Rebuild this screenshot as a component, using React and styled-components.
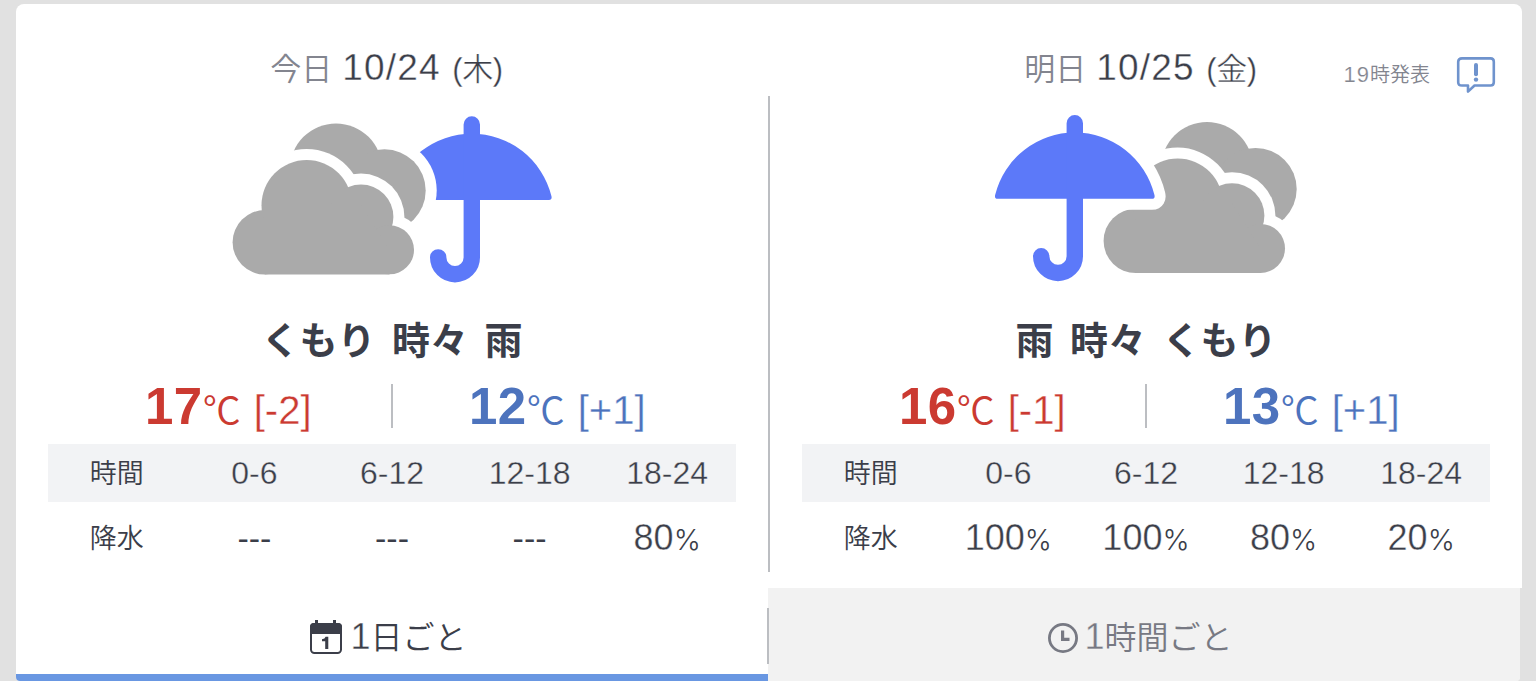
import styled, {createGlobalStyle, css} from "styled-components";

const GlobalStyle = createGlobalStyle`
  * {
    box-sizing: border-box;
  }

  body {
    margin: 0;
    height: 681px;
    overflow: hidden;
    background: #e1e1e1;
    color: #3b3e49;
    font-family: "Liberation Sans", "Noto Sans CJK JP", sans-serif;
    font-weight: 350;
  }
`;

// 数字を細く見せるため、背景色で縁取りします.
const thin = css`
  -webkit-text-stroke: 0.35px ${(props) => props.$back || "#fff"};
`;

const Page = styled.div`
  height: 681px;
  padding: 4px 14px 0 16px;
  overflow: hidden;
`;

const Card = styled.main`
  display: flex;
  height: 584px;
  border-radius: 8px 8px 0 0;
  background: #fff;
`;

const Divider = styled.div`
  width: 2px;
  height: ${(props) => props.$height}px;
  margin: ${(props) => props.$margin};
  flex: none;
  background: #bcbec2;
`;

const Day = styled.section`
  position: relative;
  width: 688px;
  flex: none;
  margin-left: 32px;
`;

const DayTitle = styled.h2`
  display: flex;
  align-items: baseline;
  justify-content: center;
  height: 106px;
  margin: 0;
  padding: 43px 11px 0 0;
  font-size: 31px;
  line-height: 42px;
  font-weight: 350;
  white-space: pre;
`;

const DayLabel = styled.span`
  margin-right: 10px;
  color: #83858f;
`;

const DateText = styled.span`
  font-size: 37px;
  letter-spacing: 1.2px;
  ${thin}
`;

const Week = styled.span`
  letter-spacing: -0.4px;
  ${thin}
`;

// 発表時刻とお知らせアイコン
const Issued = styled.div`
  position: absolute;
  top: 51px;
  right: -6px;
  display: flex;
  align-items: center;
  gap: 26px;
  color: #83858f;
  font-size: 20px;
  line-height: 40px;
`;

const IssuedTime = styled.span`
  font-size: 22px;
  letter-spacing: 1px;
  -webkit-text-stroke: 0.2px #fff;
`;

const WeatherIcon = styled.svg`
  display: block;
  width: 344px;
  height: 180px;
  margin: 0 auto;
`;

const Condition = styled.div`
  height: 90px;
  padding-top: 23px;
  font-size: 38px;
  line-height: 56px;
  font-weight: 700;
  text-align: center;
  word-spacing: 6px;
`;

const Temps = styled.div`
  display: flex;
  height: 64px;
  padding-top: 4px;
`;

const Temp = styled.div`
  display: flex;
  width: 343px;
  flex: none;
  align-items: baseline;
  margin-top: -2px;
  padding-left: ${(props) => (props.$high ? 97 : 76)}px;
  font-size: 38px;
  line-height: 50px;
  color: ${(props) => (props.$high ? "#cb3a31" : "#4d73bd")};
`;

const Degree = styled.span`
  font-size: 51px;
  font-weight: 700;
  letter-spacing: 0.5px;
`;

const Unit = styled.span`
  font-family: "Noto Sans CJK JP", sans-serif;
`;

const Diff = styled.span`
  margin-left: 13px;
  font-size: 40px;
  ${thin}
`;

const Row = styled.div`
  display: grid;
  grid-template-columns: repeat(5, 1fr);
  align-items: center;
  justify-items: center;
  height: ${(props) => (props.$head ? 58 : 72)}px;
  ${(props) =>
    props.$head &&
    css`
      background: #f2f3f5;
    `}
`;

const RowName = styled.span`
  padding-bottom: 3px;
  font-size: 27px;
`;

const Hour = styled.span`
  font-size: 32px;
  ${thin}
`;

const Chance = styled.span`
  font-size: ${(props) => (props.$empty ? 34 : 36)}px;
  ${(props) => !props.$empty && thin}
`;

const Percent = styled.span`
  font-family: Inter, sans-serif;
  font-size: 29px;
  font-weight: 350;
  -webkit-text-stroke: 0;
`;

const Tabs = styled.nav`
  display: flex;
  width: 1504px;
  height: 93px;
  border-radius: 0 0 4px 4px;
  overflow: hidden;
`;

const Tab = styled.button`
  display: flex;
  flex: 1;
  align-items: center;
  justify-content: center;
  gap: ${(props) => (props.$active ? 8 : 6)}px;
  padding: 11px 7px 0 0;
  border: 0;
  border-bottom: 7px solid ${(props) => (props.$active ? "#6997e2" : "#f2f2f2")};
  background: ${(props) => (props.$active ? "#fff" : "#f2f2f2")};
  color: ${(props) => (props.$active ? "#3b3e49" : "#777983")};
  font: inherit;
  font-size: 32px;
`;

const TabLabel = styled.span`
  margin-top: -4px;
`;

const TabNumber = styled.span`
  font-size: 36px;
  ${thin}
`;

const TabDivider = styled(Divider)`
  margin: 20px -1px 0;
  z-index: 1;
`;

const CANOPY =
  "M394.6 200Q391.2 200 392.2 196A82 82 0 0 1 551.4 196Q552.4 200 549 200Z";

const CloudBack = ({gap = 0}) => (
  <>
    <circle cx="336" cy="169.4" r={46 + gap} />
    <circle cx="384.5" cy="190.5" r={41.2 + gap} />
  </>
);

const CloudFront = ({gap = 0}) => (
  <>
    <circle cx="264.8" cy="242.3" r={32.2 + gap} />
    <circle cx="306.7" cy="205.2" r={45.2 + gap} />
    <circle cx="361" cy="217" r={32.4 + gap} />
    <circle cx="389.5" cy="249.8" r={24.5 + gap} />
    <path d="M264.8 205H361L389.5 250V274.4H264.8Z" />
  </>
);

const Cloud = () => (
  <>
    <g fill="#fff"><CloudBack gap={11} /></g>
    <g fill="#aaa"><CloudBack /></g>
    <g fill="#fff"><CloudFront gap={11} /></g>
    <g fill="#aaa"><CloudFront /></g>
  </>
);

const Umbrella = () => (
  <g>
    <path d={CANOPY} fill="#5c79f9" stroke="#fff" strokeWidth="22" strokeLinejoin="round" paintOrder="stroke" />
    <path
      d="M471.8 124.5V257.4A16.8 16.8 0 0 1 438.2 257.4"
      fill="none"
      stroke="#5c79f9"
      strokeWidth="16.4"
      strokeLinecap="round"
    />
  </g>
);

// 先に描いたものが後ろに隠れる
const CloudyThenRain = () => (
  <WeatherIcon viewBox="220 110 344 180">
    <Umbrella />
    <Cloud />
  </WeatherIcon>
);

const RainThenCloudy = () => (
  <WeatherIcon viewBox="220 110 344 180">
    <g transform="translate(117 -1.4)">
      <Cloud />
    </g>
    <g transform="translate(-151 -1.2)">
      <Umbrella />
    </g>
  </WeatherIcon>
);

const NoticeIcon = () => (
  <svg width="40" height="38" viewBox="0 0 40 38" fill="none" stroke="#6f93cd">
    <path
      d="M6 2.4H34.5Q37.8 2.4 37.8 5.7V26.2Q37.8 29.5 34.5 29.5H18.5L12 35.6V29.5H6Q2.2 29.5 2.2 26.2V5.7Q2.2 2.4 6 2.4Z"
      strokeWidth="2.6"
      strokeLinejoin="round"
    />
    <path d="M20 9V18.2" strokeWidth="4" strokeLinecap="round" />
    <circle cx="20" cy="23.6" r="2.2" fill="#6f93cd" stroke="none" />
  </svg>
);

const CalendarIcon = () => (
  <svg width="32" height="34" viewBox="0 0 32 34" fill="none">
    <rect x="1" y="4" width="30" height="29" rx="3.5" stroke="#3b3e49" strokeWidth="2" />
    <path d="M0 14V6.5Q0 3 3.5 3H5V0H8V3H23V0H26V3H28.5Q32 3 32 6.5V14Z" fill="#3b3e49" />
    <path d="M12 19.3Q15 19 15.6 16.8H18.3V29H15.2V21.3H12Z" fill="#3b3e49" />
  </svg>
);

const ClockSvg = styled.svg`
  margin-top: 2px;
`;

const ClockIcon = () => (
  <ClockSvg width="30" height="30" viewBox="0 0 30 30" fill="none" stroke="#777983">
    <circle cx="15" cy="15" r="13.6" strokeWidth="2.8" />
    <path d="M14.6 7.5V16.4H21.5" strokeWidth="3.2" />
  </ClockSvg>
);

const days = [
  {
    label: "今日",
    date: "10/24",
    week: "(木)",
    Icon: CloudyThenRain,
    condition: "くもり 時々 雨",
    high: ["17", "[-2]"],
    low: ["12", "[+1]"],
    chances: [null, null, null, 80],
  },
  {
    label: "明日",
    date: "10/25",
    week: "(金)",
    Icon: RainThenCloudy,
    condition: "雨 時々 くもり",
    high: ["16", "[-1]"],
    low: ["13", "[+1]"],
    chances: [100, 100, 80, 20],
    issued: "19",
  },
];

const hours = ["0-6", "6-12", "12-18", "18-24"];

function Forecast({day}) {
  const {Icon} = day;

  return (
    <Day>
      <DayTitle>
        <DayLabel>{day.label}</DayLabel>
        <DateText>{day.date} </DateText>
        <Week>{day.week}</Week>
      </DayTitle>
      {day.issued && (
        <Issued>
          <span><IssuedTime>{day.issued}</IssuedTime>時発表</span>
          <NoticeIcon />
        </Issued>
      )}
      <Icon />
      <Condition>{day.condition}</Condition>
      <Temps>
        <Temp $high>
          <Degree>{day.high[0]}</Degree>
          <Unit>℃</Unit>
          <Diff>{day.high[1]}</Diff>
        </Temp>
        <Divider $height={44} />
        <Temp>
          <Degree>{day.low[0]}</Degree>
          <Unit>℃</Unit>
          <Diff>{day.low[1]}</Diff>
        </Temp>
      </Temps>
      <Row $head>
        <RowName>時間</RowName>
        {hours.map((hour) => (
          <Hour key={hour} $back="#f2f3f5">{hour}</Hour>
        ))}
      </Row>
      <Row>
        <RowName>降水</RowName>
        {day.chances.map((chance, index) => (
          <Chance key={index} $empty={chance === null}>
            {chance === null ? "---" : <>{chance}<Percent>%</Percent></>}
          </Chance>
        ))}
      </Row>
    </Day>
  );
}

function App() {
  return (
    <Page>
      <GlobalStyle />
      <Card>
        <Forecast day={days[0]} />
        <Divider $height={476} $margin="92px 0 0 32px" />
        <Forecast day={days[1]} />
      </Card>
      <Tabs>
        <Tab $active>
          <CalendarIcon />
          <TabLabel><TabNumber>1</TabNumber>日ごと</TabLabel>
        </Tab>
        <TabDivider $height={56} />
        <Tab>
          <ClockIcon />
          <TabLabel><TabNumber $back="#f2f2f2">1</TabNumber>時間ごと</TabLabel>
        </Tab>
      </Tabs>
    </Page>
  );
}

export default App;
